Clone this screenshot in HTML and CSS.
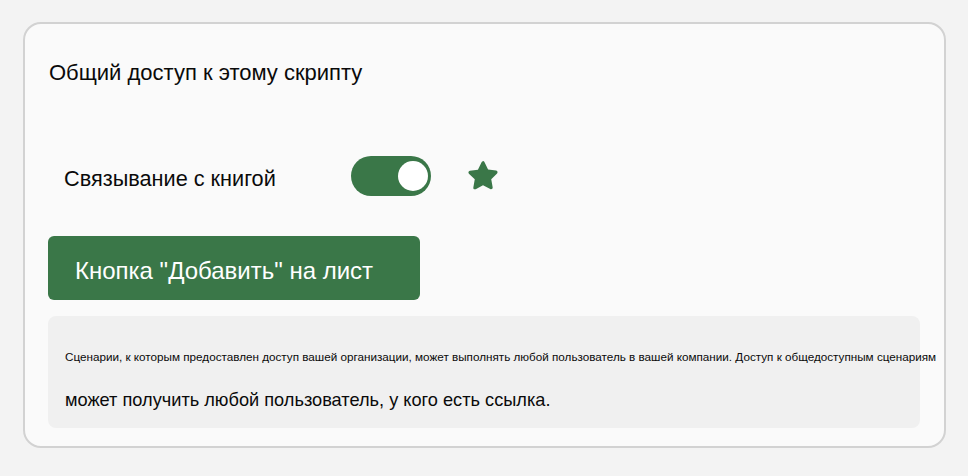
FILE: index.html
```html
<!DOCTYPE html>
<html lang="ru">
<head>
    <meta charset="UTF-8">
    <meta name="viewport" content="width=device-width, initial-scale=1.0">
    <title>Общий доступ к этому скрипту</title>
    <link rel="stylesheet" href="styles.css">
</head>
<body>
    <div class="card">
        <h1 class="title">Общий доступ к этому скрипту</h1>

        <!-- Workbook link toggle -->
        <div class="option-row">
            <span class="option-label">Связывание с книгой</span>
            <div class="toggle on"><span class="knob"></span></div>
            <svg class="star" width="38" height="38" viewBox="0 0 24 24">
                <path d="M12 2.6c.4 0 .7.2.9.6l2.3 4.7 5.1.7c.9.1 1.2 1.2.6 1.8l-3.7 3.6.9 5.1c.2.9-.8 1.5-1.5 1.1L12 17.9l-4.6 2.4c-.8.4-1.7-.2-1.5-1.1l.9-5.1-3.7-3.6c-.6-.6-.3-1.7.6-1.8l5.1-.7 2.3-4.7c.2-.4.5-.6.9-.6z"/>
            </svg>
        </div>

        <button class="add-btn">Кнопка "Добавить" на лист</button>

        <!-- Sharing note -->
        <div class="info">
            <p class="info-small">Сценарии, к которым предоставлен доступ вашей организации, может выполнять любой пользователь в вашей компании. Доступ к общедоступным сценариям</p>
            <p class="info-large">может получить любой пользователь, у кого есть ссылка.</p>
        </div>
    </div>
</body>
</html>
```

FILE: styles.css
```css
body {
    margin: 0;
    padding: 22px 22px 0 23px;
    background-color: #f3f3f3;
    font-family: "Liberation Sans", Arial, sans-serif;
    color: #0a0a0a;
}
.card {
    height: 426px;
    box-sizing: border-box;
    border: 2px solid #d2d2d2;
    border-radius: 18px;
    background-color: #fafafa;
    padding: 0 24px 0 23px;
}
.title {
    margin: 38px 0 0 1px;
    font-size: 22px;
    font-weight: normal;
    line-height: 22px;
}
.option-row {
    display: flex;
    align-items: center;
    margin-top: 72px;
    padding-left: 16px;
    height: 40px;
}
.option-label {
    font-size: 21.7px;
    width: 287px;
    padding-top: 6px;
}
.toggle {
    width: 80px;
    height: 40px;
    border-radius: 20px;
    background-color: #3a7748;
    display: flex;
    align-items: center;
    justify-content: flex-end;
    padding-right: 3px;
    box-sizing: border-box;
}
.knob {
    width: 30px;
    height: 30px;
    border-radius: 50%;
    background-color: #fff;
}
.star {
    margin-left: 33px;
    fill: #3a7748;
}
.add-btn {
    display: block;
    margin-top: 40px;
    width: 372px;
    height: 64px;
    border: none;
    border-radius: 6px;
    background-color: #3a7748;
    color: #fff;
    font-family: "Liberation Sans", Arial, sans-serif;
    font-size: 24px;
    text-align: left;
    padding: 6px 0 0 27px;
}
.info {
    margin-top: 16px;
    height: 112px;
    border-radius: 8px;
    background-color: #f0f0f0;
    padding: 30px 0 0 17px;
    box-sizing: border-box;
}
.info p {
    margin: 0;
    white-space: nowrap;
}
.info-small {
    font-size: 11.7px;
    line-height: 22px;
}
.info-large {
    margin-top: 21px !important;
    font-size: 18.2px;
    line-height: 22px;
}
```
